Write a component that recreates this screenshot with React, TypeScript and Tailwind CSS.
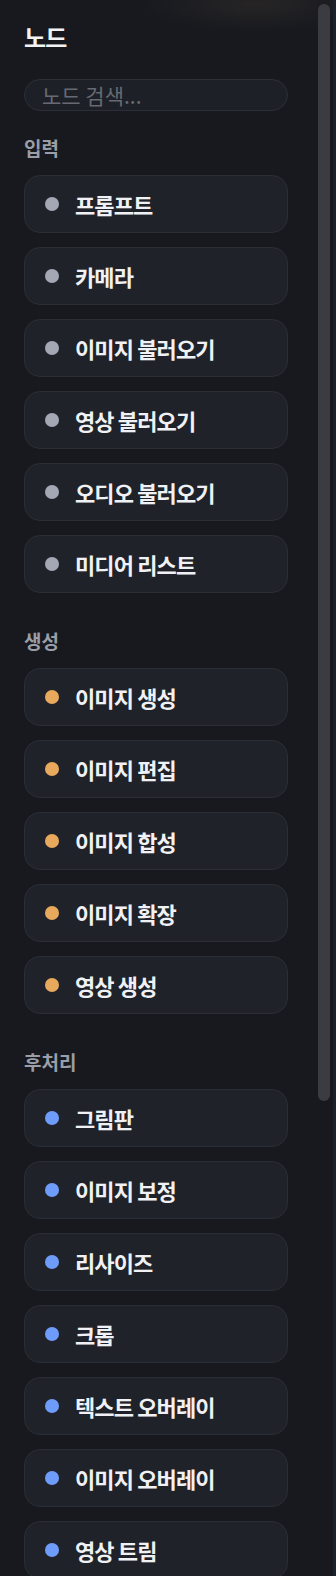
import React from "react";

type Item = { label: string };
type Section = { title: string; dot: string; items: Item[] };

const SECTIONS: Section[] = [
  {
    title: "입력",
    dot: "bg-[#a3a8b4]",
    items: [
      { label: "프롬프트" },
      { label: "카메라" },
      { label: "이미지 불러오기" },
      { label: "영상 불러오기" },
      { label: "오디오 불러오기" },
      { label: "미디어 리스트" },
    ],
  },
  {
    title: "생성",
    dot: "bg-[#e8a95c]",
    items: [
      { label: "이미지 생성" },
      { label: "이미지 편집" },
      { label: "이미지 합성" },
      { label: "이미지 확장" },
      { label: "영상 생성" },
    ],
  },
  {
    title: "후처리",
    dot: "bg-[#6f9bfa]",
    items: [
      { label: "그림판" },
      { label: "이미지 보정" },
      { label: "리사이즈" },
      { label: "크롭" },
      { label: "텍스트 오버레이" },
      { label: "이미지 오버레이" },
      { label: "영상 트림" },
    ],
  },
];

export default function App() {
  return (
    <div className="w-[336px] h-[1576px] flex overflow-hidden bg-[#17191f] font-['Noto_Sans_CJK_KR','Noto_Sans',sans-serif]">
      <div className="relative flex-1 overflow-hidden">
        {/* warm glow at the top */}
        <div className="absolute left-[140px] top-[-24px] w-[230px] h-[56px] bg-[radial-gradient(ellipse_at_center,rgba(62,54,46,0.4),transparent_70%)]" />

        <div className="relative pl-6 pr-[45px] pt-[23px]">
          <h1 className="text-[24px] leading-[28px] font-bold tracking-[-0.03em] text-[#f2f3f5]">노드</h1>

          <div className="mt-7 h-8 rounded-full border border-[#2c2f37] bg-[#1d2027] flex items-center px-[17px]">
            <span className="text-[21px] leading-none text-[#676a72]">노드 검색...</span>
          </div>

          {SECTIONS.map((s, i) => (
            <div key={s.title} className={i === 0 ? "mt-[23px]" : "mt-[34px]"}>
              <div className="text-[19px] leading-[28px] font-bold text-[#9a9ea8] mb-[13px]">{s.title}</div>
              <div className="flex flex-col gap-[14px]">
                {s.items.map(it => (
                  <div
                    key={it.label}
                    className="h-[58px] shrink-0 rounded-2xl border border-[#2b2e36] bg-[#1f2229] flex items-center pl-5 gap-4"
                  >
                    <span className={`w-3.5 h-3.5 rounded-full shrink-0 ${s.dot}`} />
                    <span className="text-[22px] leading-none font-bold tracking-[-0.04em] text-[#f0f1f4] whitespace-nowrap">{it.label}</span>
                  </div>
                ))}
              </div>
            </div>
          ))}
        </div>

        {/* scrollbar thumb */}
        <div className="absolute left-[318px] top-1 w-3 h-[1097px] rounded-full bg-[#3b3c41]" />
      </div>
      <div className="w-[3px] bg-[#1c2130]" />
    </div>
  );
}
